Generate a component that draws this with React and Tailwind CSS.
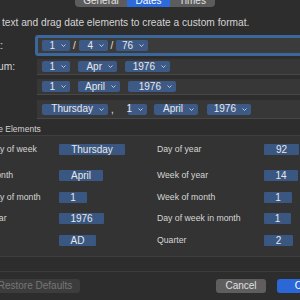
import React from 'react';

function Chev() {
    return (
        <svg width="5" height="3" viewBox="0 0 5 3" className="shrink-0">
            <path d="M0.5 0.5 L2.5 2.5 L4.5 0.5" stroke="#c9d3e3" strokeWidth="0.9" fill="none" />
        </svg>
    );
}

function Tok({ className, children }) {
    return (
        <div className={`flex items-center justify-end gap-[6px] pr-[4px] h-[11px] rounded-[2px] bg-[#3d5a86] text-[10px] leading-none text-[#e8e8e8] ${className}`}>
            <span>{children}</span>
            <Chev />
        </div>
    );
}

function Elem({ className, children }) {
    return (
        <div className={`flex items-center justify-center h-[11px] rounded-[1px] bg-[#3a5782] text-[10px] leading-none text-[#e8e8e8] ${className}`}>
            {children}
        </div>
    );
}

function ElemRow({ className, left, leftVal, right, rightVal, labelClass = '' }) {
    return (
        <div className={`flex items-center h-[11px] pl-[28px] ${className}`}>
            <div className="flex items-center w-[168px] shrink-0">
                <span className={`w-[70px] shrink-0 text-[8.7px] text-[#d6d6d6] whitespace-nowrap ${labelClass}`}>{left}</span>
                {leftVal}
            </div>
            <span className="w-[107px] shrink-0 text-[8.7px] text-[#d6d6d6] whitespace-nowrap">{right}</span>
            {rightVal}
        </div>
    );
}

export default function App() {
    return (
        <div className="w-[300px] h-[300px] overflow-hidden bg-[#2d2d2d] font-['Liberation_Sans',sans-serif]">
            <div className="-ml-[40px] w-[380px] flex flex-col">
                {/* tabs */}
                <div className="flex ml-[115px] -mt-[11px] h-[18px] text-[10px] leading-none">
                    <div className="w-[52px] flex items-end justify-center pb-[1px] bg-[#5c5c5c] text-[#e2e2e2] rounded-bl-[4px]">General</div>
                    <div className="w-[43px] flex items-end justify-center pb-[1px] bg-[#2c6bdb] text-white">Dates</div>
                    <div className="w-[45px] flex items-end justify-center pb-[1px] bg-[#5c5c5c] text-[#e2e2e2] rounded-br-[4px]">Times</div>
                </div>

                <p className="mt-[10px] pl-[17px] h-[12px] text-[10.2px] leading-[12px] text-[#d4d4d4] whitespace-nowrap">
                    Type text and drag date elements to create a custom format.
                </p>

                {/* short */}
                <div className="flex items-center mt-[6px] h-[21px]">
                    <span className="pl-[16px] w-[75px] shrink-0 text-[10.2px] text-[#d6d6d6]">Short:</span>
                    <div className="flex-1 h-[21px] flex items-center pl-[4px] border-[3px] border-[#3b679b] rounded-[3px] bg-[#3b3b3b]">
                        <Tok className="w-[28px]">1</Tok>
                        <span className="w-[9px] text-center text-[10px] text-[#e0e0e0]">/</span>
                        <Tok className="w-[29px]">4</Tok>
                        <span className="w-[8px] text-center text-[10px] text-[#e0e0e0]">/</span>
                        <Tok className="w-[32px]">76</Tok>
                    </div>
                </div>

                {/* medium */}
                <div className="flex items-center mt-[3px] h-[16px]">
                    <span className="pl-[16px] w-[77px] shrink-0 text-[10.2px] text-[#d6d6d6]">Medium:</span>
                    <div className="flex-1 h-[16px] flex items-center gap-[8px] pl-[5px] bg-[#373737] border-b border-[#474747]">
                        <Tok className="w-[28px]">1</Tok>
                        <Tok className="w-[39px]">Apr</Tok>
                        <Tok className="w-[45px]">1976</Tok>
                    </div>
                </div>

                {/* long */}
                <div className="flex items-center mt-[4px] h-[16px]">
                    <span className="pl-[10px] w-[77px] shrink-0 text-[10.2px] text-[#d6d6d6]">Long:</span>
                    <div className="flex-1 h-[16px] flex items-center gap-[8px] pl-[5px] bg-[#373737] border-b border-[#474747]">
                        <Tok className="w-[28px]">1</Tok>
                        <Tok className="w-[42px]">April</Tok>
                        <Tok className="w-[48px]">1976</Tok>
                    </div>
                </div>

                {/* full */}
                <div className="flex items-center mt-[5px] h-[19px]">
                    <span className="pl-[10px] w-[77px] shrink-0 text-[10.2px] text-[#d6d6d6]">Full:</span>
                    <div className="flex-1 h-[19px] flex items-center pl-[5px] bg-[#373737] border-b border-[#474747]">
                        <Tok className="w-[66px]">Thursday</Tok>
                        <span className="w-[20px] pl-[3px] text-[10px] text-[#e0e0e0]">,</span>
                        <Tok className="w-[19px]">1</Tok>
                        <Tok className="w-[44px] ml-[7px]">April</Tok>
                        <Tok className="w-[44px] ml-[9px]">1976</Tok>
                    </div>
                </div>

                <div className="mt-[5px] pl-[25px] h-[11px] text-[8.5px] leading-[11px] font-medium text-[#d4d4d4]">Date Elements</div>

                <div className="h-[122px] bg-[#333333] border border-[#3e3e3e] rounded-[4px] flex flex-col">
                    <ElemRow className="mt-[8px]" left="Day of week" leftVal={<Elem className="w-[66px]">Thursday</Elem>} right="Day of year" rightVal={<Elem className="w-[35px]">92</Elem>} />
                    <ElemRow className="mt-[15px]" left="Month" leftVal={<Elem className="w-[44px]">April</Elem>} right="Week of year" rightVal={<Elem className="w-[34px]">14</Elem>} />
                    <ElemRow className="mt-[11px]" left="Day of month" leftVal={<Elem className="w-[28px]">1</Elem>} right="Week of month" rightVal={<Elem className="w-[28px]">1</Elem>} />
                    <ElemRow className="mt-[10px]" left="Year" leftVal={<Elem className="w-[45px]">1976</Elem>} right="Day of week in month" rightVal={<Elem className="w-[27px]">1</Elem>} />
                    <ElemRow className="mt-[11px]" labelClass="-ml-[6px] mr-[6px]" left="Era" leftVal={<Elem className="w-[37px]">AD</Elem>} right="Quarter" rightVal={<Elem className="w-[29px]">2</Elem>} />
                </div>

                <div className="mt-[14px] h-px bg-[#3c3c3c]" />

                <div className="flex mt-[7px] h-[14px] text-[10px] leading-none">
                    <div className="ml-[30px] w-[90px] flex items-center justify-center rounded-[3px] bg-[#3c3c3c] text-[#767676]">Restore Defaults</div>
                    <div className="ml-[136px] w-[50px] flex items-center justify-center rounded-[3px] bg-[#5e5e5e] text-[#e0e0e0]">Cancel</div>
                    <div className="ml-[11px] w-[50px] flex items-center justify-center rounded-[3px] bg-[#2b67d6] text-white">OK</div>
                </div>
            </div>
        </div>
    );
}
